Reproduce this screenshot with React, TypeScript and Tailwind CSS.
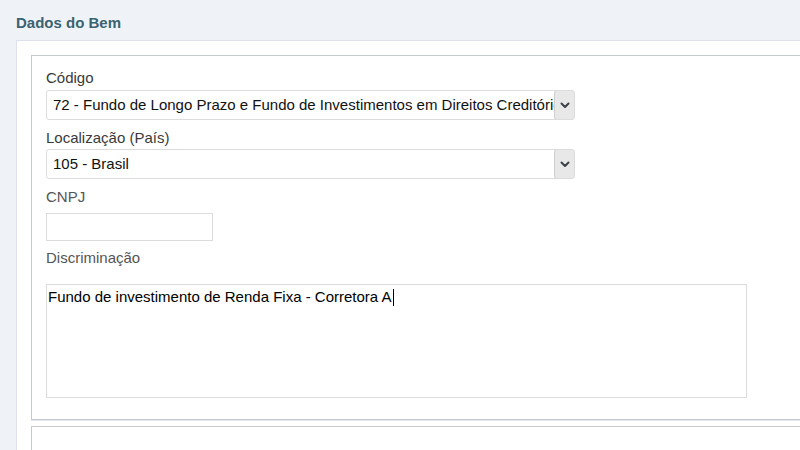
import React from "react";

function Chevron() {
  return (
    <svg width="10" height="7" viewBox="0 0 10 7" fill="none">
      <path d="M1.5 1.5 L5 5 L8.5 1.5" stroke="#3c4248" strokeWidth="2" strokeLinecap="round" strokeLinejoin="round" />
    </svg>
  );
}

function Select({ value }: { value: string }) {
  return (
    <div className="relative flex h-[30px] w-[529px] items-center overflow-hidden rounded-[3px] border border-[#dcdcdc] bg-white">
      <div className="flex-1 overflow-hidden whitespace-nowrap pl-[6px] text-[15px] text-[#111]">
        {value}
      </div>
      <div className="absolute right-[-1px] top-[-1px] flex h-[30px] w-[21px] items-center justify-center rounded-[3px] border border-[#cfcfcf] bg-[#e8e8e8]">
        <Chevron />
      </div>
    </div>
  );
}

export default function App() {
  return (
    <div
      className="h-[450px] w-[800px] overflow-hidden bg-[#eff3f7]"
      style={{ fontFamily: '"Liberation Sans", Arial, sans-serif' }}
    >
      <div className="flex h-[40px] items-center pl-[16px] pt-[6px]">
        <span className="text-[15px] font-bold text-[#3b6271]">Dados do Bem</span>
      </div>
      <div className="ml-[16px] h-[410px] border-l border-t border-[#dbe2ea] bg-white pl-[14px] pt-[14px]">
        <div className="w-[790px] border border-[#c6cacf] pb-[21px] pl-[14px] pt-[12px] shadow-[0_1px_0_#e3e6ea]">
          <div className="flex h-[20px] items-center text-[15px] text-[#3a3a3a]">Código</div>
          <div className="mt-[2px]">
            <Select value="72 - Fundo de Longo Prazo e Fundo de Investimentos em Direitos Creditórios" />
          </div>
          <div className="mt-[8px] flex h-[20px] items-center text-[15px] text-[#3a3a3a]">Localização (País)</div>
          <div className="mt-[1px]">
            <Select value="105 - Brasil" />
          </div>
          <div className="mt-[8px] flex h-[20px] items-center text-[15px] text-[#555]">CNPJ</div>
          <div className="mt-[6px] h-[28px] w-[167px] border border-[#dcdcdc] bg-white" />
          <div className="mt-[7px] flex h-[20px] items-center text-[15px] text-[#555]">Discriminação</div>
          <div className="mt-[16px] h-[114px] w-[701px] border border-[#dcdcdc] bg-white pl-[1px] pt-[3px]">
            <div className="flex items-center text-[15px] leading-[18px] text-black">
              <span>Fundo de investimento de Renda Fixa - Corretora A</span>
              <span className="ml-[1px] inline-block h-[17px] w-[1px] bg-black" />
            </div>
          </div>
        </div>
        <div className="mt-[6px] h-[40px] w-[790px] border border-[#c6cacf]" />
      </div>
    </div>
  );
}
